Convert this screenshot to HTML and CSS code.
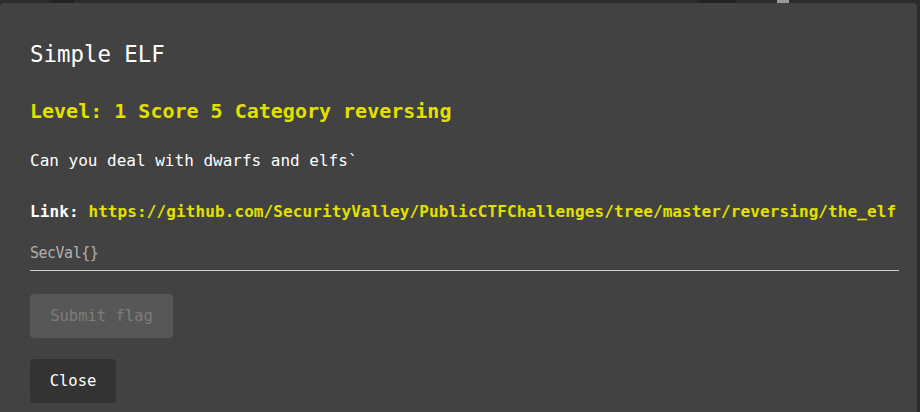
FILE: index.html
```html
<!DOCTYPE html>
<html>
<head>
<meta charset="utf-8">
<link rel="stylesheet" href="styles.css">
</head>
<body>
<div class="backdrop">
  <div class="strip">
    <span class="blk b1"></span>
    <span class="blk b2"></span>
    <span class="blk b3"></span>
  </div>
  <div class="dialog">
    <h2 class="title">Simple ELF</h2>
    <h3 class="meta">Level: 1 Score 5 Category reversing</h3>
    <p class="desc">Can you deal with dwarfs and elfs`</p>
    <p class="link"><b>Link:</b> <a href="#">https://github.com/SecurityValley/PublicCTFChallenges/tree/master/reversing/the_elf</a></p>
    <div class="field"><input class="flag" type="text" placeholder="SecVal{}"></div>
    <div class="actions">
      <button class="btn submit" disabled>Submit flag</button>
      <button class="btn close">Close</button>
    </div>
  </div>
</div>
</body>
</html>
```
FILE: styles.css
```css
html, body {
  margin: 0;
  padding: 0;
  background: #2b2b2b;
  overflow: hidden;
}
.backdrop {
  width: 920px;
  height: 412px;
  position: relative;
  font-family: "DejaVu Sans Mono", "Liberation Mono", monospace;
}
.strip {
  height: 3px;
  position: relative;
}
.blk {
  position: absolute;
  top: 0;
  height: 3px;
  background: #222;
}
.b1 { left: 52px; width: 22px; }
.b2 { left: 700px; width: 36px; }
.b3 { left: 777px; width: 12px; background: #9a9a9a; }
.dialog {
  width: 917px;
  height: 409px;
  box-sizing: border-box;
  background: #424242;
  border-radius: 4px 4px 0 0;
  padding: 33px 18px 0 30px;
  color: #fff;
}
.title {
  margin: 0;
  font-size: 22.4px;
  font-weight: normal;
  line-height: 36px;
}
.meta {
  margin: 25px 0 0;
  font-size: 20px;
  font-weight: bold;
  line-height: 28px;
  color: #e3e000;
}
.desc {
  margin: 24px 0 0;
  font-size: 16px;
  line-height: 24px;
}
.link {
  margin: 27px 0 0;
  font-size: 16px;
  line-height: 24px;
  letter-spacing: 0.1px;
  white-space: nowrap;
}
.link b { font-weight: bold; }
.link a {
  color: #e3e000;
  font-weight: bold;
  text-decoration: none;
}
.field {
  margin-top: 14px;
  border-bottom: 1px solid #cfcfcf;
  width: 869px;
}
.flag {
  display: block;
  width: 100%;
  box-sizing: border-box;
  background: transparent;
  border: 0;
  outline: none;
  padding: 3px 0 5px;
  font-family: inherit;
  font-size: 15px;
  line-height: 24px;
  color: #fff;
  letter-spacing: -0.5px;
}
.flag::placeholder { color: #b0b0b0; }
.actions {
  display: flex;
  flex-direction: column;
  align-items: flex-start;
  gap: 21px;
  margin-top: 23px;
}
.btn {
  font-family: inherit;
  font-size: 15.5px;
  border: 0;
  border-radius: 4px;
  height: 44px;
  padding: 0;
  white-space: nowrap;
}
.submit {
  background: #575757;
  color: #7c7c7c;
  width: 143px;
}
.close {
  background: #333;
  color: #fff;
  width: 86px;
}
```
